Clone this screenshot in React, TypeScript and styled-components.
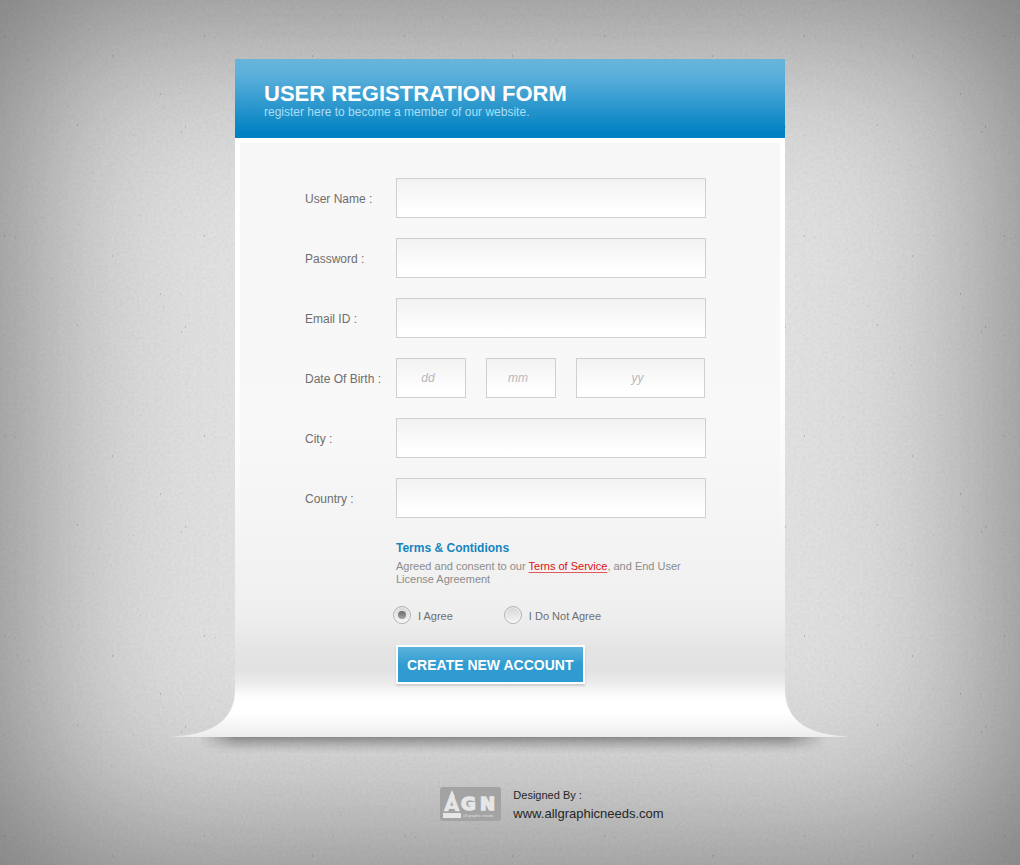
import React from "react";
import styled, { createGlobalStyle } from "styled-components";

const GlobalStyle = createGlobalStyle`
  *, *::before, *::after { box-sizing: border-box; }
  body {
    margin: 0;
    font-family: "Liberation Sans", Arial, sans-serif;
    font-size: 12px;
    color: #6e6e6e;
  }
`;

const Page = styled.div`
  position: relative;
  min-height: 100vh;
  display: flex;
  flex-direction: column;
  align-items: center;
  padding: 59px 20px 40px;
  overflow: hidden;
  background: #e2e2e2;
  box-shadow: inset 0 0 210px rgba(0, 0, 0, 0.53);
`;

const Texture = styled.svg`
  position: absolute;
  inset: 0;
  width: 100%;
  height: 100%;
  pointer-events: none;
`;

const Sheet = styled.main`
  position: relative;
  width: 100%;
  max-width: 550px;
`;

const Header = styled.header`
  padding: 24px 29px 19px;
  background: linear-gradient(#67b5db 0%, #5aafda 22%, #0081c1 94%, #0081c1 100%);
`;

const Title = styled.h1`
  margin: 0;
  font-size: 22px;
  line-height: 22px;
  font-weight: bold;
  color: #fff;
`;

const Subtitle = styled.p`
  margin: 0;
  font-size: 12px;
  line-height: 14px;
  color: #a9def5;
`;

const Form = styled.form`
  position: relative;
  display: flex;
  flex-direction: column;
  gap: 20px;
  padding: 40px 79px 53px 70px;
  background: linear-gradient(
    #f7f7f7 0,
    #f8f8f8 300px,
    #f4f4f4 390px,
    #f0f0f0 460px,
    #eeeeee 480px,
    #e4e4e4 512px,
    #e2e2e2 532px,
    #ebebeb 544px,
    #fcfcfc 558px,
    #ffffff 566px,
    #ffffff 576px,
    #ececec 599px
  );

  &::before {
    content: "";
    position: absolute;
    inset: 0;
    pointer-events: none;
    border: 5px solid #fff;
    border-bottom: 0;
    mask-image: linear-gradient(#000 200px, transparent 420px);
  }
`;

const Row = styled.div`
  display: grid;
  grid-template-columns: 91px 1fr;
  align-items: center;
`;

const Label = styled.label`
  line-height: 14px;
  padding-top: 2px;
`;

const Field = styled.input`
  width: 100%;
  min-width: 0;
  height: 40px;
  padding: 0 10px;
  border: 1px solid #d0d0d0;
  border-radius: 0;
  background: linear-gradient(#f2f2f2, #fff 85%);
  font: inherit;
  color: #6e6e6e;
`;

const DateGroup = styled.div`
  display: grid;
  grid-template-columns: 70px 70px 1fr;
  gap: 20px;
  padding-right: 1px;
`;

const DateField = styled(Field)`
  padding: 0 6px 0 0;
  text-align: center;

  &::placeholder {
    color: #b9b9b9;
    font-style: italic;
    opacity: 1;
  }
`;

const Agreement = styled.section`
  margin-left: 91px;
  padding-top: 3px;
`;

const TermsTitle = styled.h2`
  margin: 0 0 5px;
  font-size: 12px;
  line-height: 14px;
  color: #1385bf;
`;

const TermsText = styled.p`
  margin: 0;
  max-width: 300px;
  font-size: 11px;
  line-height: 13px;
  color: #8c8c8c;
`;

const TermsLink = styled.a`
  color: #d90f16;
  text-decoration: underline;
  text-decoration-color: #e4575b;
  text-underline-offset: 2px;
`;

const Choices = styled.div`
  display: flex;
  gap: 51px;
  margin-left: 88px;
`;

const Choice = styled.label`
  display: flex;
  align-items: center;
  gap: 7px;
  height: 18px;
  font-size: 11px;
  line-height: 14px;
`;

const ChoiceText = styled.span`
  padding-top: 2px;
`;

const Radio = styled.input`
  appearance: none;
  display: grid;
  place-items: center;
  width: 18px;
  height: 18px;
  margin: 0;
  border: 1px solid #b3b3b3;
  border-radius: 50%;
  background: linear-gradient(#d6d6d6, #f6f6f6);
  box-shadow: inset 0 0 0 1px rgba(255, 255, 255, 0.5);

  &:checked::before {
    content: "";
    width: 8px;
    height: 8px;
    border-radius: 50%;
    background: linear-gradient(#6a6a6a, #a6a6a6);
  }
`;

const Submit = styled.button`
  align-self: flex-start;
  height: 39px;
  margin: 1px 0 0 91px;
  padding: 0 10px 0 9px;
  border: 2px solid #fff;
  background: linear-gradient(#5cb3dc, #309cd1 50%, #2f9ad0);
  box-shadow: 0 2px 2px rgba(0, 0, 0, 0.14);
  font: bold 14px/16px "Liberation Sans", Arial, sans-serif;
  color: #fff;
  white-space: nowrap;
  cursor: pointer;
`;

const Curl = styled.svg<{ $side: "left" | "right" }>`
  position: absolute;
  bottom: 0;
  ${(p) => p.$side}: -64px;
  width: 64px;
  height: 62px;
  ${(p) => p.$side === "right" && "transform: scaleX(-1);"}
`;

const SheetShadow = styled.div`
  position: absolute;
  top: 100%;
  left: -36px;
  right: -42px;
  height: 17px;
  background: linear-gradient(rgba(0, 0, 0, 0.34), rgba(0, 0, 0, 0.19) 35%, rgba(0, 0, 0, 0.06) 70%, transparent);
  mask-image: linear-gradient(to right, transparent, #000 36px, #000 calc(100% - 40px), transparent);
`;

const Footer = styled.footer`
  position: relative;
  display: flex;
  justify-content: center;
  gap: 12px;
  margin: 50px 0 0;
  padding-left: 84px;
  color: #262626;
`;

const Credit = styled.div`
  display: flex;
  flex-direction: column;
  gap: 4px;
  padding-top: 1px;
`;

const CreditLabel = styled.span`
  font-size: 11px;
  line-height: 14px;
`;

const CreditLink = styled.a`
  font-size: 13px;
  line-height: 15px;
  color: inherit;
  text-decoration: none;
`;

const specks: [number, number, number][] = [
  [112, 55, 2], [15, 37, 1], [42, 17, 1], [28, 60, 1], [52, 78, 1], [61, 46, 1],
  [160, 93, 2], [180, 93, 1], [163, 107, 1], [185, 126, 2], [181, 131, 2], [77, 124, 2],
  [4, 135, 1], [99, 148, 1], [111, 165, 1], [93, 173, 1], [39, 182, 1], [60, 193, 1],
  [133, 135, 1], [4, 35, 2], [78, 24, 1], [133, 35, 1], [140, 15, 1], [68, 106, 1],
];

function PaperTexture() {
  return (
    <Texture aria-hidden="true">
      <defs>
        <filter id="grain" x="0" y="0" width="100%" height="100%">
          <feTurbulence type="fractalNoise" baseFrequency="0.35" numOctaves="3" seed="4" />
          <feColorMatrix values="0 0 0 0 0  0 0 0 0 0  0 0 0 0 0  0.5 0 0 0 -0.15" />
        </filter>
        <pattern id="specks" width="200" height="200" patternUnits="userSpaceOnUse">
          {specks.map(([x, y, h]) => (
            <rect key={`${x}-${y}`} x={x} y={y} width="1" height={h} fill="#000" opacity={0.06 + h * 0.05} />
          ))}
        </pattern>
      </defs>
      <rect width="100%" height="100%" filter="url(#grain)" opacity="0.11" />
      <rect width="100%" height="100%" fill="url(#specks)" />
    </Texture>
  );
}

function PageCurl({ side }: { side: "left" | "right" }) {
  const id = `curl-${side}`;
  return (
    <Curl $side={side} viewBox="0 0 64 62" aria-hidden="true">
      <defs>
        <linearGradient id={id} x1="0" y1="0" x2="0" y2="62" gradientUnits="userSpaceOnUse">
          <stop offset="0" stopColor="#ececec" />
          <stop offset="0.35" stopColor="#fcfcfc" />
          <stop offset="0.62" stopColor="#ffffff" />
          <stop offset="1" stopColor="#ececec" />
        </linearGradient>
      </defs>
      <path d="M64 0V62H20L0 61.5C38 60 64 48 64 14Z" fill={`url(#${id})`} />
    </Curl>
  );
}

function AgnLogo() {
  return (
    <svg width="61" height="34" viewBox="0 0 61 34" role="img" aria-label="AGN">
      <rect width="61" height="34" rx="3" fill="#a3a3a3" />
      <path d="M12 3L15 10H9Z" fill="#e6e6e6" />
      <g fontFamily="DejaVu Sans" fontWeight="bold" fill="#e6e6e6" stroke="#e6e6e6">
        <text x="4" y="24" fontSize="20" strokeWidth="0.5">A</text>
        <text x="21" y="23" fontSize="18" strokeWidth="1.5">G</text>
        <text x="40" y="23" fontSize="18" strokeWidth="1.5">N</text>
      </g>
      <rect x="3" y="26" width="18" height="5" fill="#e6e6e6" />
      <text x="23" y="30" fontFamily="Liberation Sans" fontSize="4" fill="#e0e0e0">
        all graphic needs
      </text>
    </svg>
  );
}

function TextRow({ id, label, type = "text" }: { id: string; label: string; type?: string }) {
  return (
    <Row>
      <Label htmlFor={id}>{label}</Label>
      <Field id={id} name={id} type={type} />
    </Row>
  );
}

export default function App() {
  return (
    <>
      <GlobalStyle />
      <Page>
        <PaperTexture />
        <Sheet>
          <Header>
            <Title>USER REGISTRATION FORM</Title>
            <Subtitle>register here to become a member of our website.</Subtitle>
          </Header>
          <Form onSubmit={(e) => e.preventDefault()}>
            <TextRow id="username" label="User Name :" />
            <TextRow id="password" label="Password :" type="password" />
            <TextRow id="email" label="Email ID :" type="email" />
            <Row>
              <Label htmlFor="day">Date Of Birth :</Label>
              <DateGroup>
                <DateField id="day" name="day" placeholder="dd" />
                <DateField name="month" placeholder="mm" aria-label="Month of birth" />
                <DateField name="year" placeholder="yy" aria-label="Year of birth" />
              </DateGroup>
            </Row>
            <TextRow id="city" label="City :" />
            <TextRow id="country" label="Country :" />
            <Agreement>
              <TermsTitle>Terms &amp; Contidions</TermsTitle>
              <TermsText>
                Agreed and consent to our <TermsLink href="#terms">Terns of Service</TermsLink>, and End User
                License Agreement
              </TermsText>
            </Agreement>
            <Choices>
              <Choice>
                <Radio type="radio" name="agreement" value="yes" defaultChecked />
                <ChoiceText>I Agree</ChoiceText>
              </Choice>
              <Choice>
                <Radio type="radio" name="agreement" value="no" />
                <ChoiceText>I Do Not Agree</ChoiceText>
              </Choice>
            </Choices>
            <Submit type="submit">CREATE NEW ACCOUNT</Submit>
          </Form>
          <PageCurl side="left" />
          <PageCurl side="right" />
          <SheetShadow />
        </Sheet>
        <Footer>
          <AgnLogo />
          <Credit>
            <CreditLabel>Designed By :</CreditLabel>
            <CreditLink href="#allgraphicneeds">www.allgraphicneeds.com</CreditLink>
          </Credit>
        </Footer>
      </Page>
    </>
  );
}
